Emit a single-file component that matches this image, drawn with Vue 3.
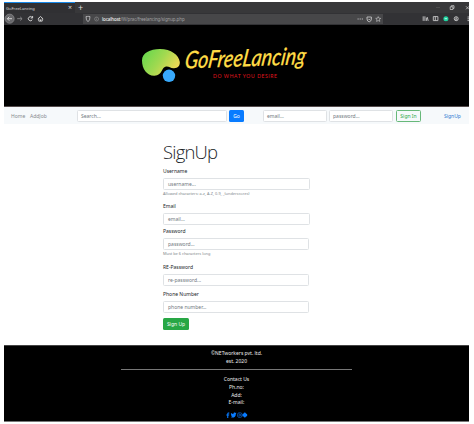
<script setup>
const fields = [
  { label: 'Username', hint: 'Allowed characters: a-z, A-Z, 0-9, _(underscores)', placeholder: 'username...', key: 'username' },
  { label: 'Email', placeholder: 'email...', key: 'email' },
  { label: 'Password', hint: 'Must be 6 characters long', placeholder: 'password...', key: 'password' },
  { label: 'RE-Password', placeholder: 're-password...', key: 'repassword' },
  { label: 'Phone Number', placeholder: 'phone number...', key: 'phone' },
]
</script>

<template>
  <div class="window">
    <div class="tabs">
      <div class="tab"><span>GoFreeLancing</span><span class="close">×</span></div>
      <span class="plus">+</span>
      <svg class="controls" viewBox="0 0 38 11" fill="none" stroke="#ddd" stroke-width=".7">
        <path d="M5 5.5h4" stroke="#555" /><path d="M19.200 4.800h2.700v2.700h-2.700zM20.300 4.700v-1H23v2.700h-1" /><path d="M35 4.300l3 3M38 4.300l-3 3" />
      </svg>
    </div>
    <div class="toolbar">
      <svg class="navicons" viewBox="0 0 44 12" fill="none" stroke="#ddd" stroke-width=".9">
        <circle cx="5.6" cy="5.7" r="4.6" fill="#68686b" stroke="#929294" stroke-width=".6" />
        <path d="M8 5.7H3.4M5.3 3.7l-2 2 2 2" />
        <path d="M13.2 5.7H18M16.2 3.9l1.9 1.8-1.9 1.8" stroke="#89898b" />
        <path d="M28.2 4.5a2.1 2.1 0 1 0 .1 2.2M28.6 3v2h-2" />
        <path d="M33.8 6l2.7-2.5L39.2 6M34.8 5.6v2.5h3.4V5.6M36.5 8V6.4" />
      </svg>
      <div class="address">
        <svg class="shield" viewBox="0 0 16 10" fill="none" stroke="#c4c4c6" stroke-width=".8">
          <path d="M3 2.6q1.8 0 2-.4.5.4 2 .4Q7 6.6 5 7.7 3 6.6 3 2.6z" />
          <circle cx="13.6" cy="5" r="2" stroke="#8f8f91" stroke-width=".6" /><path d="M13.6 4.600v1.500M13.6 3.500v.6" stroke="#8f8f91" stroke-width=".6" />
        </svg>
        <span class="url"><b>localhost</b>/W/prac/freelancing/signup.php</span>
        <svg class="urlicons" viewBox="0 0 26 10" fill="none" stroke="#d0d0d2" stroke-width=".8">
          <path d="M1.6 5h1M3.7 5h1M5.8 5h1" stroke-width="1.1" />
          <path d="M11 3h4.4v2q-.2 2.5-2.2 2.8Q11.2 7.5 11 5zM12.2 4.8l1 1 1-1" />
          <path d="M22.2 2.6l.7 1.6 1.8.2-1.3 1.2.4 1.8-1.6-.9-1.6.9.4-1.8-1.3-1.2 1.8-.2z" stroke-width=".6" />
        </svg>
      </div>
      <svg class="tools" viewBox="0 0 50 12" fill="none" stroke="#c8c8ca" stroke-width=".9">
        <path d="M4.2 3.3v4.6M5.9 3.3v4.6M7.4 4.8v3.1M8.2 4l1 3.9" />
        <path d="M14.3 3.6h4.6v4h-4.6zM16.3 3.6v4" />
        <circle cx="26.9" cy="5.7" r="2.5" fill="#20d3a0" stroke="none" /><path d="M25.7 5.7h2.4" stroke="#caffef" />
        <circle cx="37.2" cy="5.7" r="2" /><circle cx="37.2" cy="5.2" r=".5" /><path d="M36 6.9h2.4" />
        <path d="M48.5 4H50M48.5 5.8H50M48.5 7.6H50" />
      </svg>
    </div>

    <header class="banner">
      <svg class="logo" viewBox="0 0 190 66">
        <defs>
          <linearGradient id="blob" x1="0" y1="0" x2="1" y2=".5">
            <stop offset=".15" stop-color="#70d84e" /><stop offset=".55" stop-color="#a0d950" /><stop offset="1" stop-color="#edd955" />
          </linearGradient>
        </defs>
        <g transform="translate(0 15)">
          <path d="M12 20.500C12 13 20 9 30 9c11 0 19 6 19.800 13 .3 4-2.300 6.500-6.300 6.200-3.500-.2-5-2.500-8.200-1.500-4 1.300-2.800 8.300-10.800 9C17 36 12 29 12 20.500z" fill="url(#blob)" />
          <circle cx="39" cy="35.800" r="6.200" fill="#38a9fb" />
          <text class="script" x="0" y="0" textLength="121" lengthAdjust="spacingAndGlyphs" transform="translate(54 28.500) rotate(-2) skewX(-10)">GoFreeLancing</text>
          <text class="motto" x="83" y="38" textLength="64">DO WHAT YOU DESIRE</text>
        </g>
      </svg>
    </header>

    <nav class="nav">
      <a class="home">Home</a><a class="add">AddJob</a>
      <div class="input search">Search...</div>
      <div class="btn go">Go</div>
      <div class="input cred mail">email...</div>
      <div class="input cred">password...</div>
      <div class="btn signin">Sign In</div>
      <a class="signup">SignUp</a>
    </nav>

    <main class="content">
      <h1>SignUp</h1>
      <div v-for="f in fields" :key="f.key" class="field" :class="f.key">
        <label>{{ f.label }}</label>
        <div class="input">{{ f.placeholder }}</div>
        <small v-if="f.hint">{{ f.hint }}</small>
      </div>
      <div class="btn submit">Sign Up</div>
    </main>

    <footer class="footer">
      <p>©NETworkers pvt. ltd.</p>
      <p>est. 2020</p>
      <hr />
      <p>Contact Us</p>
      <p>Ph.no:</p>
      <p>Add:</p>
      <p>E-mail:</p>
      <svg class="social" viewBox="0 0 22 6" fill="#087bff">
        <path d="M1.200 6V3.500H.3v-1h.9C1.200.8 1.800.3 3.300.6v.9c-.8-.1-1 .1-1 1h1l-.2 1h-.8V6z" />
        <path d="M4.800 5c.8 0 1.200-.2 1.500-.5-.7-.1-.9-.4-1-.8h.4c-.6-.3-.8-.7-.8-1.200l.4.100C4.800 2 4.800 1.400 5.100.9 5.800 1.700 6.500 2 7.400 2.100 7.300.5 8.900.3 9.500 1l.8-.2-.4.800.5-.1-.6.700C9.800 5.400 6.800 6.400 4.800 5z" />
        <g fill="none" stroke="#0b5fc5" stroke-width=".8"><rect x="11.700" y=".9" width="4.200" height="4.400" rx="1.200" /><circle cx="13.800" cy="3.100" r=".9" /></g>
        <path d="M17.700 1.500q0-1 1.100-1t1.100 1q1.400 0 1.400 1.500t-1.400 1.500q0 1-1.100 1t-1.100-1q-1.400 0-1.400-1.500t1.400-1.500z" />
      </svg>
    </footer>
  </div>
</template>

<style>
body { background: #fff; overflow: hidden; }
</style>

<style scoped>
* { box-sizing: border-box; }
.window { width: 465px; margin: 2px 0 0 4px; font-family: "Noto Sans", "Open Sans", sans-serif; font-size: 5px; line-height: 8px; color: #343a40; white-space: nowrap; }
.tabs { display: flex; height: 11px; background: #38383a; color: #ddd; line-height: 11px; }
.tab { display: flex; justify-content: space-between; width: 71px; padding: 0 3px 0 2px; background: #303033; border-top: 1px solid #1688e8; font-size: 4.1px; line-height: 11px; }
.close { font-size: 7px; line-height: 10px; }
.plus { margin-left: 3px; font-size: 9px; }
.controls { width: 38px; height: 11px; margin-left: auto; }
.toolbar { display: flex; align-items: center; height: 12px; background: #323235; }
.navicons { width: 44px; height: 12px; }
.address { display: flex; align-items: center; width: 300px; height: 10px; margin-left: 35px; background: #474749; }
.shield { width: 16px; height: 10px; }
.url { flex: 1; margin-left: 3px; color: #a0a0a3; font-size: 4.500px; letter-spacing: -.12px; line-height: 10px; }
.url b { color: #f2f2f2; font-weight: 500; }
.urlicons { width: 26px; height: 10px; margin-right: 1px; }
.tools { width: 50px; height: 12px; margin-left: auto; }
.banner { height: 82px; padding: 0 0 0 126px; background: #000; border-bottom: 1px solid #544b4b; }
.logo { display: block; width: 190px; height: 66px; overflow: visible; }
.script { font: italic 500 24px Lato, cursive; fill: #ffdc46; stroke: #ffdc46; stroke-width: .2px; }
.motto { font: 400 5px Lato, sans-serif; fill: #e0151f; }
.nav { display: flex; align-items: center; height: 17px; padding: 0 0 0 7px; background: #f6f9fb; color: #858a8e; }
.home { width: 19px; }
.add { width: 47px; }
.input { height: 12px; padding: 0 4px; border: 1px solid #dfe2e5; border-radius: 1.500px; background: #fff; color: #707880; line-height: 10px; }
.search { width: 150px; padding: 0 3px; }
.btn { height: 12px; border-radius: 1.500px; text-align: center; line-height: 12px; }
.go { width: 15px; margin-left: 2px; background: #087bff; color: #fff; }
.cred { width: 64px; margin-right: 2px; padding: 0 3px; }
.mail { margin-left: 19px; }
.signin { width: 25px; margin-left: 1px; border: 1px solid #67b879; color: #28a745; line-height: 10px; }
.signup { margin-left: 23px; color: #2c7bd2; }
.content { display: flex; flex-direction: column; height: 221px; padding: 16px 0 0 159px; }
h1 { height: 27px; margin: 0; font: 300 18.500px/24px "Open Sans", "Noto Sans", sans-serif; letter-spacing: -.8px; color: #212529; }
.field { width: 147px; height: 34.500px; }
.field label { display: block; height: 11px; color: #212529; line-height: 8px; }
.field small { display: block; color: #80868b; font-size: 3.900px; line-height: 8px; }
.email { height: 25.500px; }
.password { height: 35.500px; }
.repassword { height: 27.500px; }
.phone { height: 28px; }
.password .input, .repassword .input, .phone .input { width: 146px; }
.submit { width: 26px; background: #28a745; color: #fff; }
.footer { display: flex; flex-direction: column; align-items: center; height: 77px; padding-top: 3px; background: #000; border-top: 1px solid #444; border-bottom: 1px solid #777; color: #eee; }
p { height: 7.700px; margin: 0; }
hr { width: 231px; height: 1px; margin: 5px 0 5px; border: 0; background: #777; }
.social { width: 22px; height: 6px; margin-top: 5.500px; }
</style>
